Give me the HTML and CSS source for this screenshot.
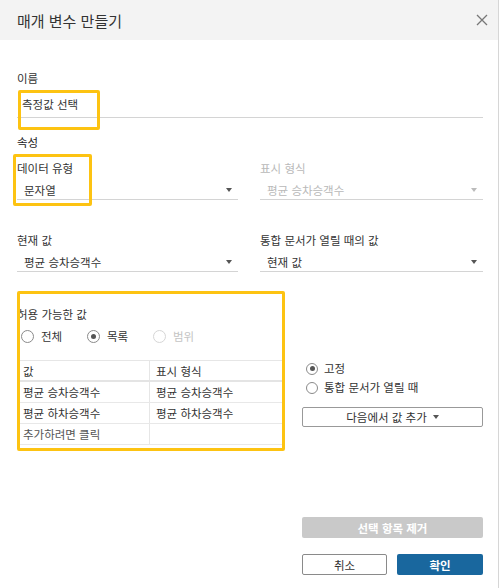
FILE: index.html
```html
<html lang="ko">
<head>
    <meta charset="UTF-8">
    <meta name="viewport" content="width=device-width, initial-scale=1.0">
    <title>매개 변수 만들기</title>
    <link rel="stylesheet" href="styles.css">
</head>
<body>
    <div class="dialog">
        <div class="dialog-header">
            <h1 class="dialog-title">매개 변수 만들기</h1>
            <svg class="close-icon" width="12" height="12" viewBox="0 0 12 12">
                <path d="M1 1 L11 11 M11 1 L1 11" stroke="#777" stroke-width="1.3" fill="none"/>
            </svg>
        </div>

        <div class="dialog-body">
            <div class="field-label">이름</div>
            <div class="name-input">측정값 선택</div>

            <div class="section-title">속성</div>

            <div class="props">
                <div class="field">
                    <div class="field-label">데이터 유형</div>
                    <div class="select"><span>문자열</span><span class="caret"></span></div>
                </div>
                <div class="field disabled">
                    <div class="field-label">표시 형식</div>
                    <div class="select"><span>평균 승차승객수</span><span class="caret"></span></div>
                </div>
                <div class="field">
                    <div class="field-label">현재 값</div>
                    <div class="select"><span>평균 승차승객수</span><span class="caret"></span></div>
                </div>
                <div class="field">
                    <div class="field-label">통합 문서가 열릴 때의 값</div>
                    <div class="select"><span>현재 값</span><span class="caret"></span></div>
                </div>
            </div>

            <div class="allowed">
                <div class="allowed-main">
                    <div class="field-label">허용 가능한 값</div>
                    <div class="radio-row">
                        <label class="radio"><span class="radio-dot"></span>전체</label>
                        <label class="radio"><span class="radio-dot checked"></span>목록</label>
                        <label class="radio off"><span class="radio-dot"></span>범위</label>
                    </div>
                    <div class="vt">
                        <div class="vt-row vt-head">
                            <div class="vt-cell">값</div>
                            <div class="vt-cell">표시 형식</div>
                        </div>
                        <div class="vt-row">
                            <div class="vt-cell">평균 승차승객수</div>
                            <div class="vt-cell">평균 승차승객수</div>
                        </div>
                        <div class="vt-row">
                            <div class="vt-cell">평균 하차승객수</div>
                            <div class="vt-cell">평균 하차승객수</div>
                        </div>
                        <div class="vt-row">
                            <div class="vt-cell add-hint">추가하려면 클릭</div>
                            <div class="vt-cell"></div>
                        </div>
                    </div>
                </div>

                <div class="allowed-side">
                    <label class="radio side"><span class="radio-dot checked"></span>고정</label>
                    <label class="radio side"><span class="radio-dot"></span>통합 문서가 열릴 때</label>
                    <button class="btn btn-outline btn-add">다음에서 값 추가 <span class="caret small"></span></button>
                </div>
            </div>

            <div class="actions">
                <button class="btn btn-remove">선택 항목 제거</button>
                <div class="btn-row">
                    <button class="btn btn-outline btn-cancel">취소</button>
                    <button class="btn btn-primary">확인</button>
                </div>
            </div>
        </div>

        <!-- highlight boxes drawn over the dialog -->
        <span class="mark mark-name"></span>
        <span class="mark mark-type"></span>
        <span class="mark mark-allowed"></span>
    </div>
</body>
</html>
```

FILE: styles.css
```css
* {
    box-sizing: border-box;
}

body {
    margin: 0;
    background: #ffffff;
    font-family: "Noto Sans CJK KR", "Noto Sans", sans-serif;
    font-size: 11.5px;
    color: #333333;
}

.dialog {
    position: relative;
    width: 499px;
    height: 588px;
    border-right: 1px solid #d6d6d6;
}

.dialog-header {
    height: 40px;
    background: #f3f3f3;
    display: flex;
    align-items: center;
    justify-content: space-between;
    padding: 0 10px 0 17px;
}

.dialog-title {
    margin: 0;
    font-size: 15px;
    font-weight: normal;
    color: #333333;
}

.dialog-body {
    padding: 30px 15px 0 17px;
}

.field-label {
    line-height: 16px;
}

.name-input {
    padding: 10px 0 5px 5px;
    line-height: 16px;
    border-bottom: 1px solid #d4d4d4;
}

.section-title {
    margin-top: 16px;
    line-height: 16px;
    color: #222222;
}

.props {
    display: grid;
    grid-template-columns: 221px 1fr;
    column-gap: 22px;
    row-gap: 32px;
    margin-top: 10px;
}

.select {
    display: flex;
    align-items: center;
    justify-content: space-between;
    padding: 6px 6px 1px 7px;
    line-height: 16px;
    border-bottom: 1px solid #d4d4d4;
}

.caret {
    display: inline-block;
    width: 0;
    height: 0;
    border-left: 3.5px solid transparent;
    border-right: 3.5px solid transparent;
    border-top: 4px solid #555555;
}

.disabled {
    color: #b9b9b9;
}

.disabled .caret {
    border-top-color: #bbbbbb;
}

/* allowed values */
.allowed {
    display: flex;
    margin-top: 34px;
}

.allowed-main {
    width: 266px;
}

.radio-row {
    display: flex;
    margin-top: 6px;
    padding-left: 4px;
    line-height: 16px;
}

.radio {
    display: flex;
    align-items: center;
    gap: 7px;
    width: 66px;
}

.radio.off {
    color: #c4c4c4;
}

.radio-dot {
    width: 13px;
    height: 13px;
    border: 1px solid #8a8a8a;
    border-radius: 50%;
    background: #ffffff;
    display: flex;
    align-items: center;
    justify-content: center;
}

.radio.off .radio-dot {
    border-color: #d6d6d6;
}

.radio-dot.checked::after {
    content: '';
    width: 5px;
    height: 5px;
    border-radius: 50%;
    background: #555555;
}

.vt {
    margin-top: 16px;
    border-top: 1px solid #e6e6e6;
}

.vt-row {
    display: grid;
    grid-template-columns: 133px 1fr;
    border-bottom: 1px solid #e8e8e8;
}

.vt-head {
    border-bottom: 2px solid #e4e4e4;
}

.vt-cell {
    height: 20px;
    padding: 2px 6px;
    line-height: 16px;
}

.vt-head .vt-cell {
    height: 19px;
}

.vt-cell:first-child {
    border-right: 1px solid #e6e6e6;
}

.add-hint {
    color: #555555;
}

.allowed-side {
    margin-left: 19px;
    width: 181px;
    padding-top: 53px;
}

.radio.side {
    width: auto;
    padding-left: 4px;
    line-height: 19px;
    gap: 6px;
}

.radio.side .radio-dot {
    width: 12px;
    height: 12px;
}

/* buttons */
.btn {
    display: flex;
    align-items: center;
    justify-content: center;
    gap: 6px;
    height: 21px;
    padding: 0;
    font-family: inherit;
    font-size: 11.5px;
    border-radius: 2px;
    cursor: pointer;
}

.btn-outline {
    background: #ffffff;
    color: #333333;
    border: 1px solid #999999;
}

.btn-add {
    width: 181px;
    height: 20px;
    margin-top: 10px;
}

.caret.small {
    border-top-color: #555555;
}

.actions {
    width: 181px;
    margin-left: 285px;
    margin-top: 72px;
}

.btn-remove {
    width: 181px;
    background: #c9c9c9;
    color: #ffffff;
    font-weight: bold;
    border: none;
}

.btn-row {
    display: flex;
    gap: 10px;
    margin-top: 16px;
}

.btn-cancel {
    width: 85px;
    border-color: #8a8a8a;
}

.btn-primary {
    width: 86px;
    background: #19679e;
    color: #ffffff;
    font-weight: bold;
    border: none;
}

/* yellow highlight boxes */
.mark {
    position: absolute;
    border: 3px solid #fdc312;
    border-radius: 2px;
    pointer-events: none;
}

.mark-name {
    left: 18px;
    top: 90px;
    width: 82px;
    height: 40px;
}

.mark-type {
    left: 13px;
    top: 154px;
    width: 79px;
    height: 52px;
}

.mark-allowed {
    left: 17px;
    top: 291px;
    width: 268px;
    height: 160px;
}
```
